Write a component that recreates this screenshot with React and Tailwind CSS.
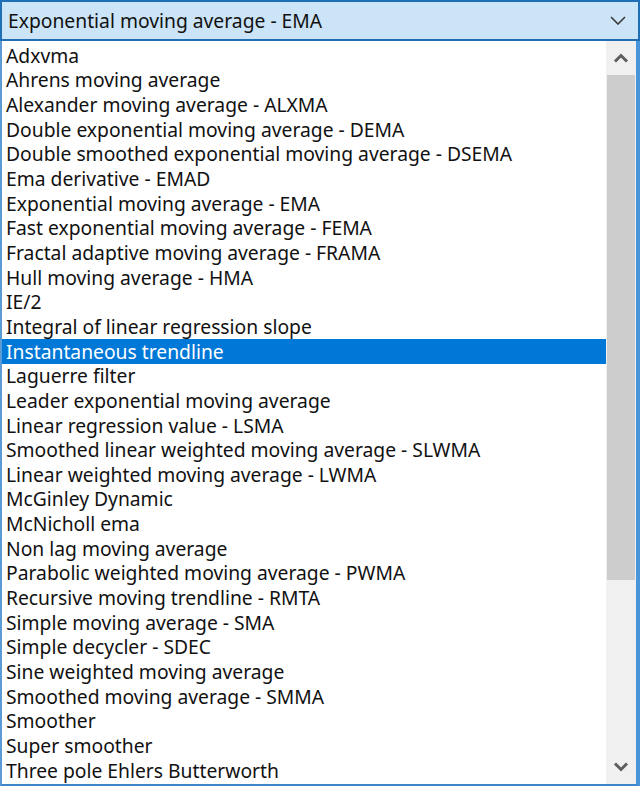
import React from 'react'

const items = [
  'Adxvma',
  'Ahrens moving average',
  'Alexander moving average - ALXMA',
  'Double exponential moving average - DEMA',
  'Double smoothed exponential moving average - DSEMA',
  'Ema derivative - EMAD',
  'Exponential moving average - EMA',
  'Fast exponential moving average - FEMA',
  'Fractal adaptive moving average - FRAMA',
  'Hull moving average - HMA',
  'IE/2',
  'Integral of linear regression slope',
  'Instantaneous trendline',
  'Laguerre filter',
  'Leader exponential moving average',
  'Linear regression value - LSMA',
  'Smoothed linear weighted moving average - SLWMA',
  'Linear weighted moving average - LWMA',
  'McGinley Dynamic',
  'McNicholl ema',
  'Non lag moving average',
  'Parabolic weighted moving average - PWMA',
  'Recursive moving trendline - RMTA',
  'Simple moving average - SMA',
  'Simple decycler - SDEC',
  'Sine weighted moving average',
  'Smoothed moving average - SMMA',
  'Smoother',
  'Super smoother',
  'Three pole Ehlers Butterworth',
]

const selected = 'Instantaneous trendline'

const Chevron = ({ up }) => (
  <svg width="16" height="10" viewBox="0 0 16 10">
    <path
      d={up ? 'M2 8.5 L8 2.5 L14 8.5' : 'M2 1.5 L8 7.5 L14 1.5'}
      fill="none"
      stroke="currentColor"
      strokeWidth="3"
    />
  </svg>
)

const App = () => {
  return (
    <div className="w-[640px] h-[786px] flex flex-col bg-white overflow-hidden font-['Noto_Sans',sans-serif] text-[19.3px] text-[#111]">
      {/* combo header */}
      <div className="h-[41px] shrink-0 flex items-center justify-between bg-[#cce4f7] border-2 border-[#1f6fb5] pl-[6px] pr-[12px]">
        <span className="leading-none">Exponential moving average - EMA</span>
        <svg width="16" height="9" viewBox="0 0 16 9" className="text-[#3a3a3a]">
          <path d="M1 1 L8 8 L15 1" fill="none" stroke="currentColor" strokeWidth="1.6" />
        </svg>
      </div>

      {/* dropdown list */}
      <div className="flex-1 flex border-l-2 border-r-[4px] border-b-2 border-l-[#5a9bd5] border-r-[#4a94dc] border-b-[#3f86c8] min-h-0">
        <div className="flex-1 pt-[2px] overflow-hidden">
          {items.map((item) => (
            <div
              key={item}
              className={`h-[24.66px] flex items-center pl-[4px] leading-none whitespace-nowrap ${
                item === selected ? 'bg-[#0078d7] text-white' : ''
              }`}
            >
              {item}
            </div>
          ))}
        </div>

        {/* scrollbar */}
        <div className="w-[30px] shrink-0 flex flex-col bg-[#f0f0f0]">
          <div className="h-[34px] flex items-center justify-center text-[#5d5d5d]">
            <Chevron up />
          </div>
          <div className="h-[505px] mx-[1px] bg-[#cdcdcd]" />
          <div className="flex-1" />
          <div className="h-[34px] flex items-center justify-center text-[#5d5d5d]">
            <Chevron />
          </div>
        </div>
      </div>
    </div>
  )
}

export default App
